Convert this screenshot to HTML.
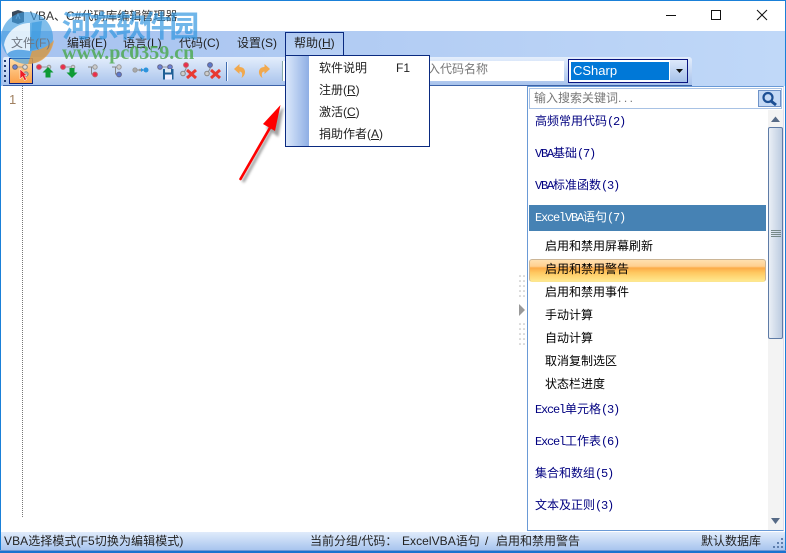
<!DOCTYPE html>
<html lang="zh"><head><meta charset="utf-8"><title>VBA、C#代码库编辑管理器</title>
<style>
html,body{margin:0;padding:0;width:786px;height:553px;overflow:hidden;background:#fff}
body{position:relative;font:12px "Liberation Sans","Noto Sans CJK SC",sans-serif;color:#222}
.a{position:absolute;white-space:nowrap}
.t{position:absolute;white-space:nowrap;line-height:16px;height:16px}
.s{font-family:"Liberation Serif","WenQuanYi Zen Hei",serif;font-size:12px;color:#000080}
.i{font-family:"Liberation Sans","WenQuanYi Zen Hei",sans-serif;font-size:12px;color:#000}
.m{font-family:"Liberation Mono",monospace;letter-spacing:-1.2px}
u{text-decoration:underline}
</style></head><body>
<!-- title bar -->
<div class="a" style="left:0;top:0;width:786px;height:553px;box-sizing:border-box;border:1px solid #1a80d8;border-bottom:0"></div>
<svg class="a" style="left:10px;top:9px" width="16" height="16"><path d="M2 3 L8 1 L14 3 V13 L8 15 L2 13Z" fill="#3a4a5c"/><path d="M6 10 L8 5 L10 10" stroke="#9ab" fill="none"/></svg>
<div class="t" style="left:30px;top:8px;font-size:12px;color:#333">VBA、C#代码库编辑管理器</div>
<svg class="a" style="left:660px;top:8px" width="112" height="14" fill="none" stroke="#111" stroke-width="1"><path d="M6 7.500H16"/><rect x="51.500" y="2.500" width="9" height="9"/><path d="M97 2L107 12M107 2L97 12"/></svg>
<!-- menu bar + toolbar backdrop -->
<div class="a" style="left:1px;top:31px;width:784px;height:55px;background:linear-gradient(90deg,#a6c2ef,#c0d8f8)"></div>
<div class="t" style="left:67px;top:35px">编辑(E)</div>
<div class="t" style="left:123px;top:35px">语言(L)</div>
<div class="t" style="left:179px;top:35px">代码(C)</div>
<div class="t" style="left:237px;top:35px">设置(S)</div>
<!-- toolbar -->
<div class="a" style="left:3px;top:57px;width:689px;height:28px;background:linear-gradient(#e4eefc,#a8c3ec);border-bottom:1px solid #3c62a8;border-radius:2px 3px 0 0"></div>
<div class="a" style="left:9px;top:58px;width:22px;height:24px;background:linear-gradient(#ffdca6,#fba04a);border:1px solid #0a1f80"></div>
<svg class="a" style="left:0;top:55px" width="290" height="32">
<g fill="#1f3a70"><rect x="4" y="5" width="2" height="2"/><rect x="4" y="10" width="2" height="2"/><rect x="4" y="15" width="2" height="2"/><rect x="4" y="20" width="2" height="2"/><rect x="4" y="25" width="2" height="2"/></g>
<!-- 1 select -->
<path d="M15 12H25" stroke="#999"/><circle cx="15" cy="12" r="2.300" fill="#6a82d8" stroke="#667"/><circle cx="25" cy="12" r="2.300" fill="#ddd" stroke="#888"/><circle cx="26" cy="19" r="2.200" fill="#aaa" stroke="#888"/>
<path d="M20 14V24L22.500 21.500L24.500 25.500L26.500 24.500L24.500 20.500H27Z" fill="#ee1c25" stroke="#fff" stroke-width=".5"/>
<!-- 2 up -->
<path d="M39 12H48" stroke="#999"/><circle cx="39" cy="12" r="2.400" fill="#ee2b4c" stroke="#b66"/><circle cx="49" cy="12" r="1.800" fill="#ccc" stroke="#999"/>
<path d="M48 12L53.500 17.500H50.500V22.500H45.500V17.500H42.500Z" fill="#0e9a35"/>
<!-- 3 down -->
<path d="M63 12H73" stroke="#999"/><circle cx="63" cy="12" r="2.400" fill="#ee2b4c" stroke="#b66"/><circle cx="73" cy="12" r="1.800" fill="#ccc" stroke="#999"/>
<path d="M69.500 13H74.500V17.500H77.500L72 23L66.500 17.500H69.500Z" fill="#0e9a35"/>
<!-- 4 tree -->
<path d="M88 12H95M91.500 12V19H95" stroke="#888" fill="none"/><circle cx="95" cy="12" r="2.200" fill="#ccc" stroke="#999"/><circle cx="95" cy="19.500" r="2.400" fill="#ee2b4c" stroke="#b66"/>
<!-- 5 tree -->
<path d="M112 12H119M115.500 12V19H119" stroke="#888" fill="none"/><circle cx="119" cy="12" r="2.200" fill="#ccc" stroke="#999"/><circle cx="119" cy="19.500" r="2.400" fill="#5b78cc" stroke="#668"/>
<!-- 6 link -->
<path d="M136 15H146" stroke="#888"/><circle cx="135" cy="15" r="2.100" fill="#aaa" stroke="#999"/><circle cx="140" cy="15" r="1.300" fill="#999"/><path d="M141 13L144 15L141 17Z" fill="#2b93dd"/><circle cx="146" cy="15" r="2.500" fill="#2b93dd"/>
<!-- 7 save -->
<path d="M160 12H170" stroke="#999"/><circle cx="160" cy="12" r="2.300" fill="#6a82d8" stroke="#668"/><circle cx="170" cy="12" r="2.300" fill="#6a82d8" stroke="#668"/>
<rect x="163" y="14" width="10.500" height="10.500" fill="#1f5f96"/><rect x="165" y="14" width="6" height="3.500" fill="#dfe8f2"/><rect x="165" y="19.500" width="7" height="5" fill="#eef"/>
<!-- 8 del -->
<path d="M186 10V14M186 14L183.500 18" stroke="#888"/><circle cx="186" cy="10" r="2.400" fill="#ee2b4c" stroke="#b66"/><circle cx="183" cy="18.500" r="2.300" fill="#ccc" stroke="#888"/>
<path d="M187 15L196 23M196 15L187 23" stroke="#e83a32" stroke-width="3"/>
<!-- 9 del -->
<path d="M210 10V14M210 14L207.500 18" stroke="#888"/><circle cx="210" cy="10" r="2.400" fill="#5b78cc" stroke="#668"/><circle cx="207" cy="18.500" r="2.300" fill="#ccc" stroke="#888"/>
<path d="M211 15L220 23M220 15L211 23" stroke="#e83a32" stroke-width="3"/>
<path d="M226.500 7V26" stroke="#3e6cb0"/><path d="M227.500 7V26" stroke="#f4f8ff"/>
<!-- undo -->
<path d="M239.500 9L234 14L239.500 19V16.500C242 16.500 243 19 241.500 23C246.500 20 246.500 12 239.500 12Z" fill="#f5a33c" opacity=".9"/>
<!-- redo -->
<path d="M264.500 9L270 14L264.500 19V16.500C262 16.500 261 19 262.500 23C257.500 20 257.500 12 264.500 12Z" fill="#f5a33c" opacity=".9"/>
</svg>
<div class="a" style="left:282px;top:61px;width:281px;height:20px;background:#fff;border-left:1px solid #8aa"></div>
<div class="t" style="left:428px;top:61px;color:#777;font-size:12px">入代码名称</div>
<!-- combo -->
<div class="a" style="left:568px;top:59px;width:118px;height:22px;background:linear-gradient(#dde9fb,#a6c1ea);border:1px solid #0a1480"></div>
<div class="a" style="left:569px;top:60px;width:101px;height:22px;background:#fff"></div>
<div class="a" style="left:571px;top:62px;width:98px;height:18px;background:#0078d7;color:#fff;font-size:13px;line-height:18px;text-indent:2px">CSharp</div>
<svg class="a" style="left:676px;top:68px" width="8" height="6"><path d="M0 1H7L3.500 5Z" fill="#111"/></svg>
<!-- gutter -->
<div class="a" style="left:22px;top:86px;height:431px;border-left:1px dotted #777"></div>
<div class="t" style="left:9px;top:92px;font-size:13px;color:#a08060">1</div>
<!-- splitter -->
<svg class="a" style="left:518px;top:274px" width="9" height="72"><g fill="#b5b5b5"><circle cx="2" cy="2" r=".8"/><circle cx="6" cy="2" r=".8"/><circle cx="2" cy="7" r=".8"/><circle cx="6" cy="7" r=".8"/><circle cx="2" cy="12" r=".8"/><circle cx="6" cy="12" r=".8"/><circle cx="2" cy="17" r=".8"/><circle cx="6" cy="17" r=".8"/><circle cx="2" cy="22" r=".8"/><circle cx="6" cy="22" r=".8"/><circle cx="2" cy="50" r=".8"/><circle cx="6" cy="50" r=".8"/><circle cx="2" cy="55" r=".8"/><circle cx="6" cy="55" r=".8"/><circle cx="2" cy="60" r=".8"/><circle cx="6" cy="60" r=".8"/><circle cx="2" cy="65" r=".8"/><circle cx="6" cy="65" r=".8"/><circle cx="2" cy="70" r=".8"/><circle cx="6" cy="70" r=".8"/></g><path d="M1 30L7 36L1 42Z" fill="#999"/></svg>
<!-- right panel -->
<div class="a" style="left:527px;top:86px;width:257px;height:445px;background:#fff;border:1px solid #6a9ad6;box-sizing:border-box;border-right:1px solid #dde"></div>
<div class="a" style="left:529px;top:88px;width:251px;height:19px;border:1px solid #a8c2e4;background:#fff"></div>
<div class="t" style="left:534px;top:90px;color:#777;font-family:'Liberation Sans','WenQuanYi Zen Hei',sans-serif">输入搜索关键词<span style="letter-spacing:2.500px">...</span></div>
<div class="a" style="left:758px;top:90px;width:21px;height:15px;background:#c4d9f5;border:1px solid #6f93c8"></div>
<svg class="a" style="left:760px;top:90px" width="18" height="17" fill="none" stroke="#1c4f94" stroke-width="2.200"><circle cx="8" cy="7.500" r="4.500"/><path d="M11 11L16 15" stroke-width="3"/></svg>
<div class="t s" style="left:535px;top:113px">高频常用代码<span class="m">(2)</span></div>
<div class="t s" style="left:535px;top:145px"><span class="m">VBA</span>基础<span class="m">(7)</span></div>
<div class="t s" style="left:535px;top:177px"><span class="m">VBA</span>标准函数<span class="m">(3)</span></div>
<div class="a" style="left:529px;top:205px;width:237px;height:26px;background:#4682b4"></div>
<div class="t s" style="left:535px;top:209px;color:#fff"><span class="m">ExcelVBA</span>语句<span class="m">(7)</span></div>
<div class="a" style="left:529px;top:259px;width:235px;height:21px;border:1px solid #cbb596;border-bottom-color:#fce690;border-radius:3px;background:linear-gradient(#ffe0b0 0,#ffd090 30%,#fcab48 38%,#ffc860 60%,#ffe88e 100%)"></div>
<div class="t i" style="left:545px;top:238px">启用和禁用屏幕刷新</div>
<div class="t i" style="left:545px;top:261px">启用和禁用警告</div>
<div class="t i" style="left:545px;top:284px">启用和禁用事件</div>
<div class="t i" style="left:545px;top:307px">手动计算</div>
<div class="t i" style="left:545px;top:330px">自动计算</div>
<div class="t i" style="left:545px;top:353px">取消复制选区</div>
<div class="t i" style="left:545px;top:376px">状态栏进度</div>
<div class="t s" style="left:535px;top:401px"><span class="m">Excel</span>单元格<span class="m">(3)</span></div>
<div class="t s" style="left:535px;top:433px"><span class="m">Excel</span>工作表<span class="m">(6)</span></div>
<div class="t s" style="left:535px;top:465px">集合和数组<span class="m">(5)</span></div>
<div class="t s" style="left:535px;top:497px">文本及正则<span class="m">(3)</span></div>
<!-- scrollbar -->
<div class="a" style="left:768px;top:110px;width:15px;height:420px;background:#f3f3f3"></div>
<div class="a" style="left:768px;top:127px;width:13px;height:210px;border:1px solid #5e7ba6;border-radius:2px;background:linear-gradient(90deg,#eaeff6,#bccbe0)"></div>
<svg class="a" style="left:768px;top:112px" width="16" height="240"><path d="M3 10L7.500 4.500L12 10Z" fill="#566a86"/><path d="M3 118.500H13M3 120.500H13M3 122.500H13M3 124.500H13" stroke="#788" /></svg>
<svg class="a" style="left:768px;top:515px" width="16" height="12"><path d="M3 3H12L7.500 9Z" fill="#566a86"/></svg>
<!-- status -->
<div class="a" style="left:1px;top:532px;width:784px;height:18px;background:linear-gradient(#e0ebfb,#a8c5ee)"></div>
<div class="a" style="left:0;top:551px;width:786px;height:2px;background:#1a72cf"></div>
<div class="a" style="left:0;top:550px;width:786px;height:1px;background:#6f97d4"></div>
<div class="t" style="left:4px;top:533px;letter-spacing:.08px">VBA选择模式(F5切换为编辑模式)</div>
<div class="t" style="left:310px;top:533px">当前分组/代码：</div>
<div class="t" style="left:402px;top:533px;letter-spacing:.05px">ExcelVBA语句</div>
<div class="t" style="left:485px;top:533px">/</div>
<div class="t" style="left:496px;top:533px">启用和禁用警告</div>
<div class="t" style="left:701px;top:533px">默认数据库</div>
<svg class="a" style="left:772px;top:537px" width="13" height="13" fill="#5f7fae"><rect x="9" y="1" width="2" height="2"/><rect x="5" y="5" width="2" height="2"/><rect x="9" y="5" width="2" height="2"/><rect x="1" y="9" width="2" height="2"/><rect x="5" y="9" width="2" height="2"/><rect x="9" y="9" width="2" height="2"/></svg>
<!-- help menu -->
<div class="a" style="left:285px;top:32px;width:57px;height:23px;border:1px solid #0a2a80;border-bottom:0;background:linear-gradient(#b0caf2,#b8d0f4)"></div>
<div class="t" style="left:294px;top:35px">帮助(<u>H</u>)</div>
<div class="a" style="left:285px;top:55px;width:143px;height:90px;background:#fff;border:1px solid #0a2a80"></div>
<div class="a" style="left:286px;top:56px;width:23px;height:90px;background:linear-gradient(90deg,#dbe8fb,#8eaee4)"></div>
<div class="a" style="left:309px;top:55px;width:121px;height:1px;background:#0a2a80"></div>
<div class="t" style="left:319px;top:60px">软件说明</div><div class="t" style="left:396px;top:60px">F1</div>
<div class="t" style="left:319px;top:82px">注册(<u>R</u>)</div>
<div class="t" style="left:319px;top:104px">激活(<u>C</u>)</div>
<div class="t" style="left:319px;top:126px">捐助作者(<u>A</u>)</div>
<!-- red arrow -->
<svg class="a" style="left:230px;top:95px" width="65" height="95">
<defs><filter id="b" x="-30%" y="-30%" width="160%" height="160%"><feGaussianBlur stdDeviation="1.200"/></filter></defs>
<g opacity=".55" fill="#555" stroke="#555" filter="url(#b)"><path d="M13 87L43 33" stroke-width="3"/><path d="M53 13L37 33L48 41Z"/></g>
<path d="M10.500 84L41 31" stroke="#f00" stroke-width="2.600" stroke-linecap="round"/><path d="M50.500 10L33 29L45 36Z" fill="#f00"/>
</svg>
<!-- watermark -->
<svg class="a" style="left:0;top:12px" width="58" height="52">
<circle cx="27" cy="26" r="26" fill="#3f9ce0" opacity=".66"/>
<path d="M4 33C6 20 18 10 32 11L30 39C20 37 12 37 7 42Z" fill="#fff" opacity=".8"/>
<path d="M30 11L42 9L39 36L30 39Z" fill="#3f9ce0" opacity=".75"/>
<path d="M28 52C42 52 52 42 54 28C48 35 40 38 32 39Z" fill="#f29a2e" opacity=".72"/>
</svg>
<div class="t" style="left:11px;top:35px;color:#6f7680">文件(F)</div>
<div class="a" style="left:62px;top:6px;font:bold 30px/36px 'Noto Sans CJK SC',sans-serif;color:#2e95e0;opacity:.68;letter-spacing:-3.200px">河东软件园</div>
<div class="a" style="left:62px;top:43px;font:bold 20px/20px 'Liberation Serif',serif;color:#4aa84a;opacity:.8">www.pc0359.cn</div>
</body></html>
